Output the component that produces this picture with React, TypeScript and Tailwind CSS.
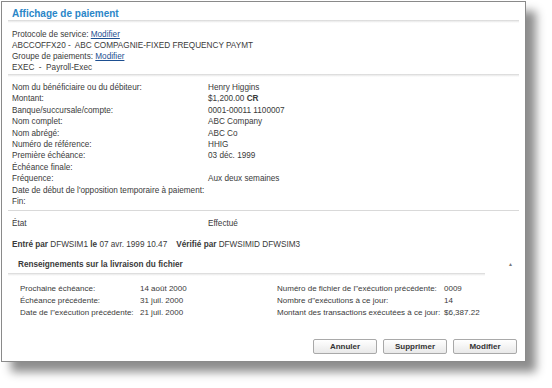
const details = [
  ["Nom du bénéficiaire ou du débiteur:", "Henry Higgins"],
  ["Montant:", "$1,200.00 CR"],
  ["Banque/succursale/compte:", "0001-00011 1100007"],
  ["Nom complet:", "ABC Company"],
  ["Nom abrégé:", "ABC Co"],
  ["Numéro de référence:", "HHIG"],
  ["Première échéance:", "03 déc. 1999"],
  ["Échéance finale:", ""],
  ["Fréquence:", "Aux deux semaines"],
  ["Date de début de l'opposition temporaire à paiement:", ""],
  ["Fin:", ""],
];

const leftDelivery = [
  ["Prochaine échéance:", "14 août 2000"],
  ["Échéance précédente:", "31 juil. 2000"],
  ["Date de l\"exécution précédente:", "21 juil. 2000"],
];

const rightDelivery = [
  ["Numéro de fichier de l\"exécution précédente:", "0009"],
  ["Nombre d\"exécutions à ce jour:", "14"],
  ["Montant des transactions exécutées à ce jour:", "$6,387.22"],
];

function Rule() {
  return <div className="h-[3px] mx-[6px] bg-gradient-to-b from-[#d6d6d6] via-[#eeeeee] to-white" />;
}

function Btn({ label }: { label: string }) {
  return (
    <button className="w-[64px] h-[15px] rounded-[2px] border border-[#a9a9a9] bg-gradient-to-b from-white to-[#e9e9e9] text-[8px] font-bold text-[#333] leading-none">
      {label}
    </button>
  );
}

export default function App() {
  return (
    <div
      className="w-[552px] h-[388px] bg-white text-[#3a3a3a] text-[8.2px] leading-[11px]"
      style={{ fontFamily: '"Liberation Sans", Arial, sans-serif' }}
    >
      <div className="ml-[1px] mt-[1px] w-[525px] h-[361px] bg-white border border-[#8a8a8a] shadow-[10px_10px_9px_rgba(0,0,0,0.45)] flex flex-col">
        <div className="px-[10px] pt-[5px] h-[18px] text-[10px] leading-[13px] font-bold text-[#2a86c8]">
          Affichage de paiement
        </div>
        <Rule />

        <div className="px-[10px] pt-[6px] pb-[1px]">
          <div>
            Protocole de service: <span className="text-[#1d4f91] underline">Modifier</span>
          </div>
          <div>ABCCOFFX20 -&nbsp; ABC COMPAGNIE-FIXED FREQUENCY PAYMT</div>
          <div>
            Groupe de paiements: <span className="text-[#1d4f91] underline">Modifier</span>
          </div>
          <div>EXEC&nbsp; -&nbsp; Payroll-Exec</div>
        </div>
        <Rule />

        <div className="px-[10px] pt-[5px] pb-[3px] grid grid-cols-[196px_1fr] leading-[11.4px]">
          {details.map(([k, v]) => (
            <div key={k} className="contents">
              <div className="whitespace-nowrap">{k}</div>
              <div>
                {k === "Montant:" ? (
                  <>
                    $1,200.00 <b>CR</b>
                  </>
                ) : (
                  v
                )}
              </div>
            </div>
          ))}
        </div>
        <div className="h-px mx-[6px] bg-[#d9d9d9]" />

        <div className="px-[10px] pt-[7px] grid grid-cols-[196px_1fr]">
          <div>État</div>
          <div>Effectué</div>
        </div>

        <div className="px-[10px] pt-[10px]">
          <b>Entré par</b> DFWSIM1 <b>le</b> 07 avr. 1999 10.47&nbsp;&nbsp;&nbsp; <b>Vérifié par</b> DFWSIMID DFWSIM3
        </div>

        <div className="mt-[9px] pl-[16px] pr-[12px] flex items-center justify-between font-bold">
          <span>Renseignements sur la livraison du fichier</span>
          <span className="text-[5px] text-[#777]">▲</span>
        </div>
        <div className="mt-[3px] mx-[6px] mr-[40px] h-[3px] bg-gradient-to-b from-[#d6d6d6] via-[#efefef] to-white" />

        <div className="mt-[7px] pl-[18px] flex leading-[12px] text-[8px]">
          <div className="w-[257px] grid grid-cols-[120px_1fr]">
            {leftDelivery.map(([k, v]) => (
              <div key={k} className="contents">
                <div>{k}</div>
                <div>{v}</div>
              </div>
            ))}
          </div>
          <div className="grid grid-cols-[167px_1fr]">
            {rightDelivery.map(([k, v]) => (
              <div key={k} className="contents">
                <div className="whitespace-nowrap">{k}</div>
                <div>{v}</div>
              </div>
            ))}
          </div>
        </div>

        <div className="mt-auto mb-[7px] pr-[8px] flex justify-end gap-[6px]">
          <Btn label="Annuler" />
          <Btn label="Supprimer" />
          <Btn label="Modifier" />
        </div>
      </div>
    </div>
  );
}
